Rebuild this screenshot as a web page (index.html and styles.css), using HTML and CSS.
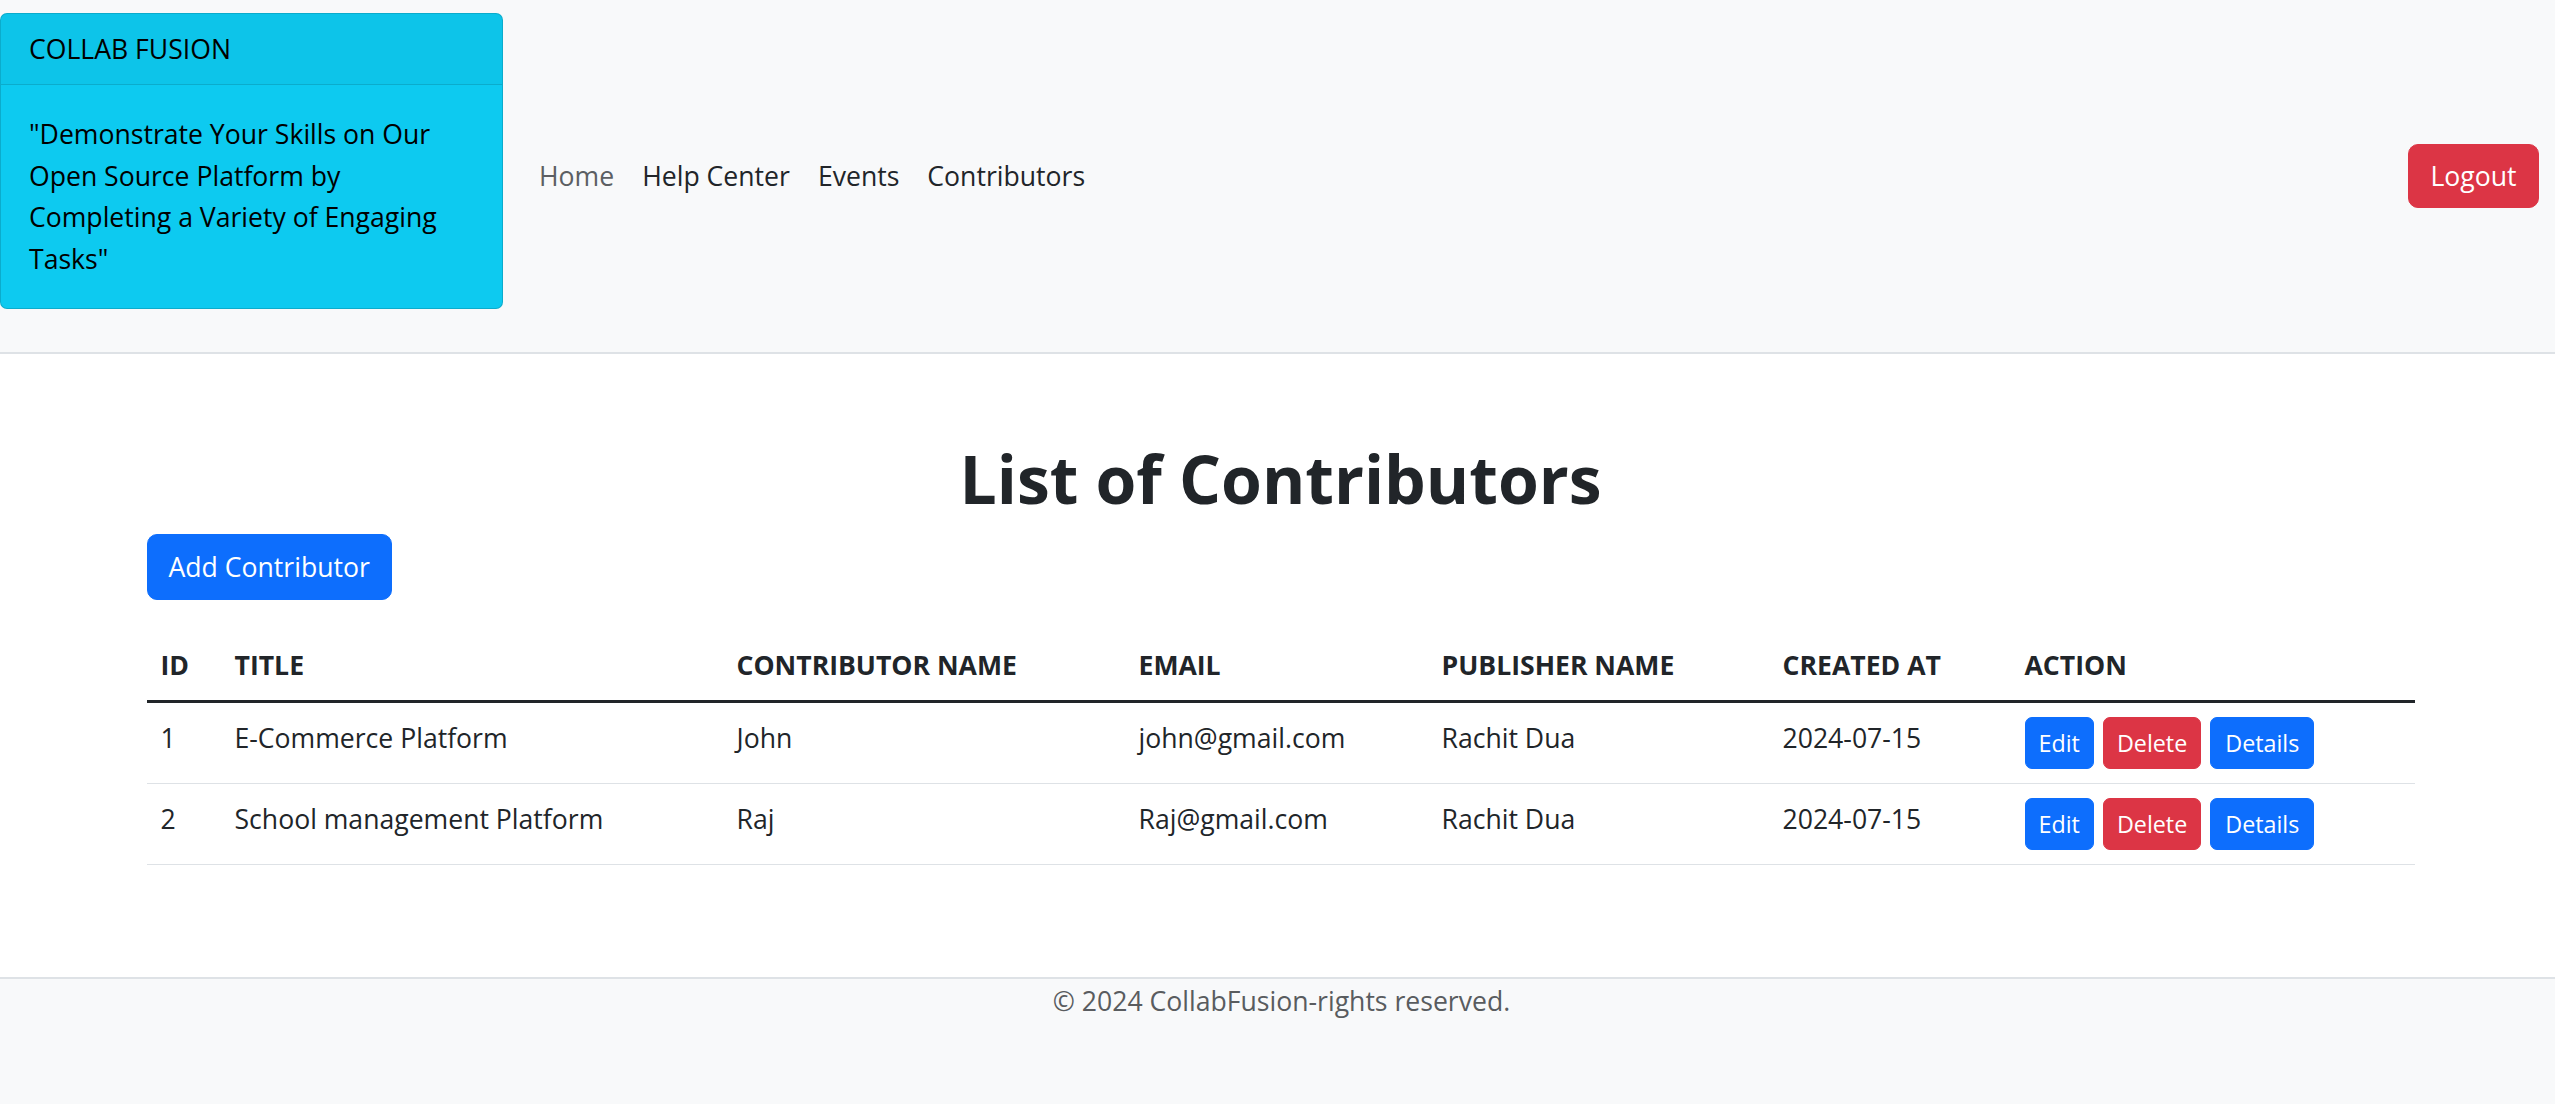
FILE: index.html
```html
<!DOCTYPE html>
<html lang="en">
<head>
<meta charset="utf-8">
<title>Collab Fusion - Contributors</title>
<link rel="stylesheet" href="styles.css">
</head>
<body>
<header class="navbar">
  <div class="brand-card">
    <div class="brand-card-header">COLLAB FUSION</div>
    <div class="brand-card-body">"Demonstrate Your Skills on Our<br>Open Source Platform by<br>Completing a Variety of Engaging<br>Tasks"</div>
  </div>
  <nav class="nav-links">
    <a class="nav-link muted" href="#">Home</a>
    <a class="nav-link" href="#">Help Center</a>
    <a class="nav-link" href="#">Events</a>
    <a class="nav-link" href="#">Contributors</a>
  </nav>
  <button class="btn btn-danger logout">Logout</button>
</header>

<main class="container">
  <h1 class="page-title">List of Contributors</h1>
  <div class="toolbar">
    <button class="btn btn-primary">Add Contributor</button>
  </div>
  <table class="table">
    <colgroup>
      <col class="c-id"><col class="c-title"><col class="c-name"><col class="c-email"><col class="c-pub"><col class="c-date"><col class="c-action">
    </colgroup>
    <thead>
      <tr>
        <th>ID</th><th>TITLE</th><th>CONTRIBUTOR NAME</th><th>EMAIL</th><th>PUBLISHER NAME</th><th>CREATED AT</th><th>ACTION</th>
      </tr>
    </thead>
    <tbody>
      <tr>
        <td>1</td><td>E-Commerce Platform</td><td>John</td><td>john@gmail.com</td><td>Rachit Dua</td><td>2024-07-15</td>
        <td><div class="actions"><button class="btn btn-sm btn-primary">Edit</button><button class="btn btn-sm btn-danger">Delete</button><button class="btn btn-sm btn-primary">Details</button></div></td>
      </tr>
      <tr>
        <td>2</td><td>School management Platform</td><td>Raj</td><td>Raj@gmail.com</td><td>Rachit Dua</td><td>2024-07-15</td>
        <td><div class="actions"><button class="btn btn-sm btn-primary">Edit</button><button class="btn btn-sm btn-danger">Delete</button><button class="btn btn-sm btn-primary">Details</button></div></td>
      </tr>
    </tbody>
  </table>
</main>

<footer class="footer">
  <p class="footer-text">© 2024 CollabFusion-rights reserved.</p>
</footer>
</body>
</html>
```
FILE: styles.css
```css
* { box-sizing: border-box; }
html, body { margin: 0; padding: 0; }
body {
  font-family: "Open Sans", "Noto Sans", "Liberation Sans", sans-serif;
  font-size: 26.6px;
  line-height: 1.5;
  color: #212529;
  background: #fff;
  min-height: 1104px;
  display: flex;
  flex-direction: column;
}

/* Navbar */
.navbar {
  display: flex;
  align-items: center;
  background: #f8f9fa;
  border-bottom: 2px solid #dee2e6;
  padding: 13px 16px 14px 0;
  height: 354px;
}
.brand-card {
  width: 503px;
  align-self: flex-start;
  background: #0dcaf0;
  border: 1.5px solid rgba(0, 0, 0, 0.15);
  border-radius: 7px;
  color: #000;
  overflow: hidden;
}
.brand-card-header {
  padding: 14px 28px;
  background: rgba(33, 37, 41, 0.03);
  border-bottom: 1.5px solid rgba(0, 0, 0, 0.12);
  line-height: 42px;
}
.brand-card-body {
  padding: 29px 28px 28px;
  line-height: 41.5px;
  white-space: nowrap;
}
.nav-links {
  display: flex;
  margin-left: 22px;
  flex: 1;
}
.nav-link {
  padding: 15px 14px 13px;
  color: #212529;
  text-decoration: none;
}
.nav-link.muted { color: #5c5f63; }

/* Buttons */
.btn {
  font-family: inherit;
  font-size: 26.6px;
  line-height: 42px;
  padding: 10px 21px;
  border: 1.5px solid transparent;
  border-radius: 10px;
  color: #fff;
  cursor: pointer;
}
.btn-primary { background: #0d6efd; border-color: #0d6efd; }
.btn-danger { background: #dc3545; border-color: #dc3545; }
.btn-sm {
  font-size: 23.3px;
  line-height: 36px;
  padding: 7px 13px;
  border-radius: 7px;
}
.logout { width: 131px; height: 64px; padding: 0; }

/* Main */
.container {
  width: 2268px;
  margin: 0 auto;
  position: relative;
  left: 3px;
  flex: 1;
}
.page-title {
  margin: 82px 0 14px;
  font-size: 66px;
  line-height: 84px;
  font-weight: 700;
  text-align: center;
}
.toolbar { margin-bottom: 30px; }
.toolbar .btn { height: 66px; padding: 0 21px; }

.table {
  width: 100%;
  border-collapse: collapse;
  table-layout: fixed;
  margin-bottom: 84px;
}
.c-id { width: 74px; }
.c-title { width: 502px; }
.c-name { width: 402px; }
.c-email { width: 303px; }
.c-pub { width: 341px; }
.c-date { width: 242px; }
.c-action { width: 404px; }
.table th, .table td {
  text-align: left;
  vertical-align: top;
  padding: 14px;
  line-height: 42px;
  white-space: nowrap;
}
.table th { font-weight: 700; }
.table thead tr { border-bottom: 3.5px solid #212529; }
.table tbody tr { border-bottom: 1.75px solid #dee2e6; }
.actions { display: flex; gap: 9px; }
.actions .btn { height: 52px; }
.actions .btn-primary:last-child { padding: 7px 14px; }

/* Footer */
.footer {
  background: #f8f9fa;
  border-top: 2px solid #dee2e6;
  height: 127px;
}
.footer-text {
  margin: 0;
  text-align: center;
  line-height: 44px;
  color: #595c5f;
  position: relative;
  left: 4px;
}
```
